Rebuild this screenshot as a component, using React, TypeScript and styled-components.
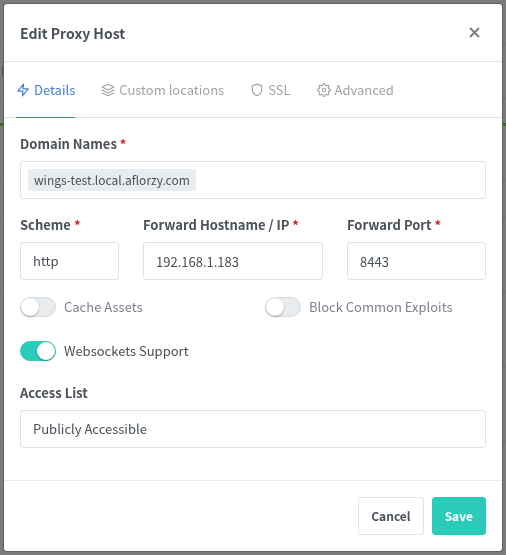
import React, { useState } from "react";
import styled, { createGlobalStyle } from "styled-components";
import { FiZap, FiLayers, FiShield, FiSettings } from "react-icons/fi";

const GlobalStyle = createGlobalStyle`
  *, *::before, *::after { box-sizing: border-box; }
  body {
    margin: 0;
    background: #7b7b7b;
    color: #495057;
    font-family: "Noto Sans CJK SC", "Noto Sans", sans-serif;
    font-size: 13px;
    line-height: 22px;
  }
  button, input, select { font: inherit; color: inherit; }
`;

const Backdrop = styled.div`
  position: fixed;
  inset: 0;
  z-index: -1;
  display: flex;
  flex-direction: column;
`;

const BackdropRow = styled.div<{ $height: number; $accent?: boolean }>`
  flex: none;
  display: flex;
  align-items: center;
  height: ${(p) => p.$height}px;
  border-bottom: ${(p) => (p.$accent ? "3px solid #357500" : "1px solid #707172")};
`;

const BackdropMark = styled.span`
  width: 4px;
  height: 10px;
  border-right: 2px solid #505153;
`;

const Page = styled.main`
  padding: 4px;
`;

const Dialog = styled.form`
  background: #fff;
  border-radius: 3px;
  box-shadow: 0 0 0 1px #606162;
`;

const Header = styled.header`
  display: flex;
  align-items: center;
  justify-content: space-between;
  height: 58px;
  padding: 0 16px;
  border-bottom: 1px solid #e3e5e8;
`;

const Title = styled.h1`
  margin: 0;
  font-size: 14px;
  line-height: 22px;
  font-weight: 700;
`;

const CloseButton = styled.button`
  display: flex;
  padding: 6px;
  border: 0;
  background: none;
  color: #808080;
  cursor: pointer;
`;

const Tabs = styled.nav`
  display: flex;
  gap: 26px;
  height: 56px;
  padding: 0 12px;
  border-bottom: 1px solid #dee0e3;
`;

const Tab = styled.a<{ $active?: boolean }>`
  display: flex;
  align-items: center;
  gap: 4px;
  height: 56px;
  color: ${(p) => (p.$active ? "#467fcf" : "#a0a4a9")};
  border-bottom: 1px solid ${(p) => (p.$active ? "#467fcf" : "transparent")};
  text-decoration: none;
  white-space: nowrap;
`;

const Body = styled.div`
  display: flex;
  flex-direction: column;
  padding: 15px 16px 32px;
  border-bottom: 1px solid #e9ecef;
`;

const Field = styled.div`
  display: flex;
  flex-direction: column;
  gap: 6px;
  min-width: 0;
`;

const Label = styled.label`
  font-size: 13px;
  line-height: 22px;
  font-weight: 700;
  white-space: nowrap;
`;

const Required = styled.span`
  color: #cd201f;
`;

const TextInput = styled.input`
  width: 100%;
  height: 38px;
  padding: 0 12px;
  border: 1px solid #dfe2e6;
  border-radius: 3px;
  background: #fff;
  outline: 0;
`;

const Select = styled.select`
  width: 100%;
  height: 38px;
  padding: 0 12px;
  border: 1px solid #dfe2e6;
  border-radius: 3px;
  background: #fff;
  appearance: none;
  outline: 0;
`;

const TagBox = styled.div`
  display: flex;
  align-items: center;
  height: 38px;
  padding: 0 7px;
  border: 1px solid #dfe2e6;
  border-radius: 3px;
`;

const Tag = styled.span`
  padding: 0 6px;
  border-radius: 3px;
  background: #e9ecef;
  font-size: 12px;
  line-height: 22px;
`;

const TagInput = styled.input`
  flex: 1;
  min-width: 0;
  border: 0;
  background: none;
  outline: 0;
`;

const HostRow = styled.div`
  display: grid;
  grid-template-columns: 99fr 180fr 139fr;
  gap: 24px;
  margin: 15px 0 16px;
`;

const Toggles = styled.div`
  display: grid;
  grid-template-columns: 1fr 1fr;
  column-gap: 24px;
  row-gap: 22px;
  margin-bottom: 20px;
`;

const ToggleLabel = styled.label<{ $on: boolean }>`
  display: flex;
  align-items: center;
  gap: 8px;
  color: ${(p) => (p.$on ? "#495057" : "#7c828c")};
  white-space: nowrap;
  cursor: pointer;
`;

const Switch = styled.input`
  appearance: none;
  flex: none;
  display: flex;
  width: 36px;
  height: 20px;
  margin: 0;
  padding: 0;
  border: 1px solid #d9dcdf;
  border-radius: 10px;
  background: #e9ecef;

  &::before {
    content: "";
    width: 18px;
    height: 18px;
    border-radius: 50%;
    background: #fff;
    box-shadow: 0 1px 2px rgba(0, 0, 0, 0.3);
  }

  &:checked {
    justify-content: flex-end;
    border-color: #2bcbba;
    background: #2bcbba;
  }
`;

const Footer = styled.footer`
  display: flex;
  justify-content: flex-end;
  gap: 8px;
  padding: 16px;
`;

const Button = styled.button<{ $primary?: boolean }>`
  height: 38px;
  padding: 0 12px;
  border: 1px solid ${(p) => (p.$primary ? "#2bcbba" : "#dfe2e6")};
  border-radius: 3px;
  background: ${(p) => (p.$primary ? "#2bcbba" : "#fff")};
  color: ${(p) => (p.$primary ? "#fff" : "#495057")};
  font-size: 12px;
  font-weight: 700;
  cursor: pointer;
`;

const backdropRows = [44, 55, 27, 54, 38, 75, 74, 75];

function Toggle({ text, initial = false }: { text: string; initial?: boolean }) {
  const [on, setOn] = useState(initial);
  return (
    <ToggleLabel $on={on}>
      <Switch type="checkbox" checked={on} onChange={() => setOn(!on)} />
      {text}
    </ToggleLabel>
  );
}

export default function App() {
  return (
    <>
      <GlobalStyle />
      <Backdrop aria-hidden="true">
        {backdropRows.map((height, i) => (
          <BackdropRow key={i} $height={height} $accent={i === 2}>
            {i === 1 && <BackdropMark />}
          </BackdropRow>
        ))}
      </Backdrop>
      <Page>
        <Dialog role="dialog" aria-labelledby="title" onSubmit={(e) => e.preventDefault()}>
          <Header>
            <Title id="title">Edit Proxy Host</Title>
            <CloseButton type="button" aria-label="Close">
              <svg width="11" height="11" viewBox="0 0 11 11" stroke="currentColor" strokeWidth="2">
                <path d="M1 1 10 10M10 1 1 10" />
              </svg>
            </CloseButton>
          </Header>
          <Tabs>
            <Tab href="#details" $active><FiZap size={14} />Details</Tab>
            <Tab href="#locations"><FiLayers size={14} />Custom locations</Tab>
            <Tab href="#ssl"><FiShield size={14} />SSL</Tab>
            <Tab href="#advanced"><FiSettings size={14} />Advanced</Tab>
          </Tabs>
          <Body>
            <Field>
              <Label htmlFor="domains">Domain Names <Required>*</Required></Label>
              <TagBox>
                <Tag>wings-test.local.aflorzy.com</Tag>
                <TagInput id="domains" />
              </TagBox>
            </Field>
            <HostRow>
              <Field>
                <Label htmlFor="scheme">Scheme <Required>*</Required></Label>
                <Select id="scheme" defaultValue="http">
                  <option>http</option>
                  <option>https</option>
                </Select>
              </Field>
              <Field>
                <Label htmlFor="host">Forward Hostname / IP <Required>*</Required></Label>
                <TextInput id="host" defaultValue="192.168.1.183" />
              </Field>
              <Field>
                <Label htmlFor="port">Forward Port <Required>*</Required></Label>
                <TextInput id="port" defaultValue="8443" />
              </Field>
            </HostRow>
            <Toggles>
              <Toggle text="Cache Assets" />
              <Toggle text="Block Common Exploits" />
              <Toggle text="Websockets Support" initial />
            </Toggles>
            <Field>
              <Label htmlFor="access">Access List</Label>
              <Select id="access">
                <option>Publicly Accessible</option>
              </Select>
            </Field>
          </Body>
          <Footer>
            <Button type="button">Cancel</Button>
            <Button type="submit" $primary>Save</Button>
          </Footer>
        </Dialog>
      </Page>
    </>
  );
}
